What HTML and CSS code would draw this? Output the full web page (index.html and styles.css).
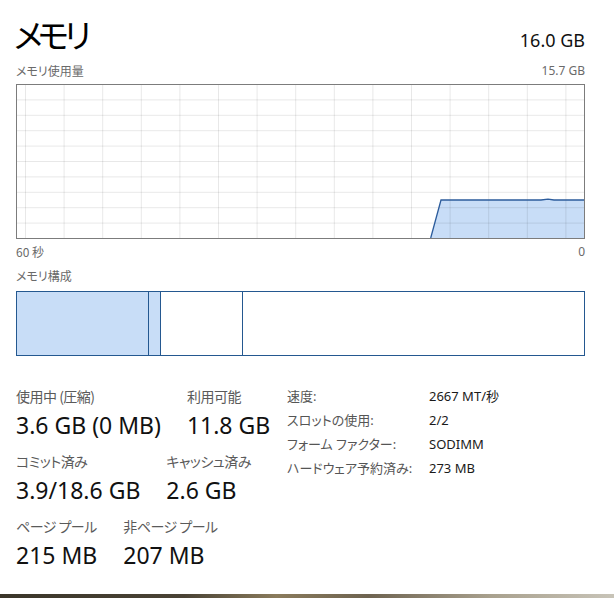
FILE: index.html
```html
<!DOCTYPE html>
<html lang="ja">
<head>
<meta charset="utf-8">
<link rel="stylesheet" href="styles.css">
</head>
<body>
<div class="page">
  <header class="head">
    <h1 class="title">メモリ</h1>
    <span class="total">16.0 GB</span>
  </header>
  <div class="row-labels">
    <span>メモリ使用量</span>
    <span>15.7 GB</span>
  </div>
  <div class="chart">
    <svg width="569" height="155" viewBox="0 0 569 155">
      <polygon class="fill" points="414.7,154 425,116 525,116 532,115.2 538,116 568,116 568,154"/>
      <g class="grid">
        <line x1="0" y1="15.9" x2="569" y2="15.9"/>
        <line x1="0" y1="31.3" x2="569" y2="31.3"/>
        <line x1="0" y1="46.7" x2="569" y2="46.7"/>
        <line x1="0" y1="62.1" x2="569" y2="62.1"/>
        <line x1="0" y1="77.5" x2="569" y2="77.5"/>
        <line x1="0" y1="92.9" x2="569" y2="92.9"/>
        <line x1="0" y1="108.3" x2="569" y2="108.3"/>
        <line x1="0" y1="123.7" x2="569" y2="123.7"/>
        <line x1="0" y1="139.1" x2="569" y2="139.1"/>
        <line x1="9.5" y1="0" x2="9.5" y2="155"/>
        <line x1="48.1" y1="0" x2="48.1" y2="155"/>
        <line x1="86.7" y1="0" x2="86.7" y2="155"/>
        <line x1="125.3" y1="0" x2="125.3" y2="155"/>
        <line x1="163.9" y1="0" x2="163.9" y2="155"/>
        <line x1="202.5" y1="0" x2="202.5" y2="155"/>
        <line x1="241.1" y1="0" x2="241.1" y2="155"/>
        <line x1="279.7" y1="0" x2="279.7" y2="155"/>
        <line x1="318.3" y1="0" x2="318.3" y2="155"/>
        <line x1="356.9" y1="0" x2="356.9" y2="155"/>
        <line x1="395.5" y1="0" x2="395.5" y2="155"/>
        <line x1="434.1" y1="0" x2="434.1" y2="155"/>
        <line x1="472.7" y1="0" x2="472.7" y2="155"/>
        <line x1="511.3" y1="0" x2="511.3" y2="155"/>
        <line x1="549.9" y1="0" x2="549.9" y2="155"/>
      </g>
      <polyline class="stroke" points="414.7,154 425,116 525,116 532,115.2 538,116 568,116"/>
      <rect class="frame" x="0.5" y="0.5" width="568" height="154"/>
    </svg>
  </div>
  <div class="axis">
    <span>60 秒</span>
    <span>0</span>
  </div>
  <div class="section-label">メモリ構成</div>
  <div class="composition">
    <div class="seg seg-used"></div>
    <div class="seg seg-modified"></div>
    <div class="seg seg-standby"></div>
    <div class="seg seg-free"></div>
  </div>
  <div class="details">
    <div class="stats">
      <div class="stat-row">
        <div class="stat">
          <div class="stat-label">使用中 (圧縮)</div>
          <div class="stat-value">3.6 GB (0 MB)</div>
        </div>
        <div class="stat">
          <div class="stat-label">利用可能</div>
          <div class="stat-value">11.8 GB</div>
        </div>
      </div>
      <div class="stat-row">
        <div class="stat">
          <div class="stat-label">コミット済み</div>
          <div class="stat-value">3.9/18.6 GB</div>
        </div>
        <div class="stat">
          <div class="stat-label">キャッシュ済み</div>
          <div class="stat-value">2.6 GB</div>
        </div>
      </div>
      <div class="stat-row">
        <div class="stat">
          <div class="stat-label">ページ プール</div>
          <div class="stat-value">215 MB</div>
        </div>
        <div class="stat">
          <div class="stat-label">非ページ プール</div>
          <div class="stat-value">207 MB</div>
        </div>
      </div>
    </div>
    <div class="specs">
      <div class="spec-label">速度:</div><div class="spec-value">2667 MT/秒</div>
      <div class="spec-label">スロットの使用:</div><div class="spec-value">2/2</div>
      <div class="spec-label">フォーム ファクター:</div><div class="spec-value">SODIMM</div>
      <div class="spec-label">ハードウェア予約済み:</div><div class="spec-value">273 MB</div>
    </div>
  </div>
</div>
<div class="desktop"></div>
</body>
</html>
```

FILE: styles.css
```css
html, body {
  margin: 0;
  padding: 0;
  background: #ffffff;
}
body {
  width: 614px;
  height: 598px;
  overflow: hidden;
  display: flex;
  flex-direction: column;
  font-family: "Noto Sans", "Noto Sans CJK JP", sans-serif;
  font-feature-settings: "palt";
  color: #1a1a1a;
}
.page {
  flex: 1;
  padding: 0 29px 0 16px;
}
.head {
  display: flex;
  justify-content: space-between;
  align-items: flex-end;
  height: 56px;
}
.title {
  margin: 0;
  font-family: "Noto Sans CJK JP", sans-serif;
  font-weight: 400;
  font-size: 33px;
  line-height: 44px;
  letter-spacing: -5px;
  margin-left: -2px;
  color: #000;
}
.total {
  font-size: 18px;
  line-height: 24px;
  margin-bottom: 4px;
  color: #111;
}
.row-labels, .axis {
  display: flex;
  justify-content: space-between;
  font-size: 12px;
  color: #6a6a6a;
}
.row-labels {
  height: 28px;
  line-height: 30px;
}
.row-labels span:first-child, .axis span:first-child, .section-label {
  font-family: "Noto Sans CJK JP", sans-serif;
}
.chart {
  height: 155px;
}
.chart svg {
  display: block;
}
.fill {
  fill: #c8ddf7;
}
.grid line {
  stroke: rgba(0, 0, 0, 0.09);
  stroke-width: 1;
}
.stroke {
  fill: none;
  stroke: #2c5c9c;
  stroke-width: 1.3;
}
.frame {
  fill: none;
  stroke: #7c7c7c;
  stroke-width: 1;
}
.axis {
  height: 26px;
  line-height: 26px;
}
.section-label {
  font-size: 12px;
  color: #6a6a6a;
  height: 26px;
  line-height: 22px;
}
.composition {
  display: flex;
  width: 569px;
  height: 65px;
  box-sizing: border-box;
  border: 1.5px solid #245890;
}
.seg {
  height: 100%;
}
.seg-used {
  width: 131px;
  background: #c8ddf7;
}
.seg-modified {
  width: 11px;
  background: #c8ddf7;
  border-left: 1.5px solid #245890;
}
.seg-standby {
  width: 81px;
  border-left: 1.5px solid #245890;
}
.seg-free {
  flex: 1;
  border-left: 1.5px solid #245890;
}
.details {
  display: flex;
  margin-top: 30px;
}
.stats {
  width: 271px;
  display: flex;
  flex-direction: column;
  gap: 7px;
}
.stat-row {
  display: flex;
  gap: 26px;
}
.stat-label {
  font-family: "Noto Sans CJK JP", sans-serif;
  font-size: 14px;
  line-height: 20px;
  letter-spacing: -0.5px;
  color: #5a5a5a;
}
.stat-value {
  font-size: 23px;
  line-height: 38px;
  color: #111;
}
.specs {
  display: grid;
  grid-template-columns: 142px auto;
  grid-auto-rows: 24px;
  font-family: "Noto Sans", "Noto Sans CJK JP", sans-serif;
  font-size: 13px;
  line-height: 20px;
}
.spec-label {
  color: #555;
}
.spec-value {
  color: #1a1a1a;
}
.desktop {
  height: 4px;
  background: linear-gradient(90deg, #3b362a 0%, #4a4335 30%, #8a7b5c 45%, #6e6350 60%, #a9a18e 80%, #c8c4b8 100%);
}
```
